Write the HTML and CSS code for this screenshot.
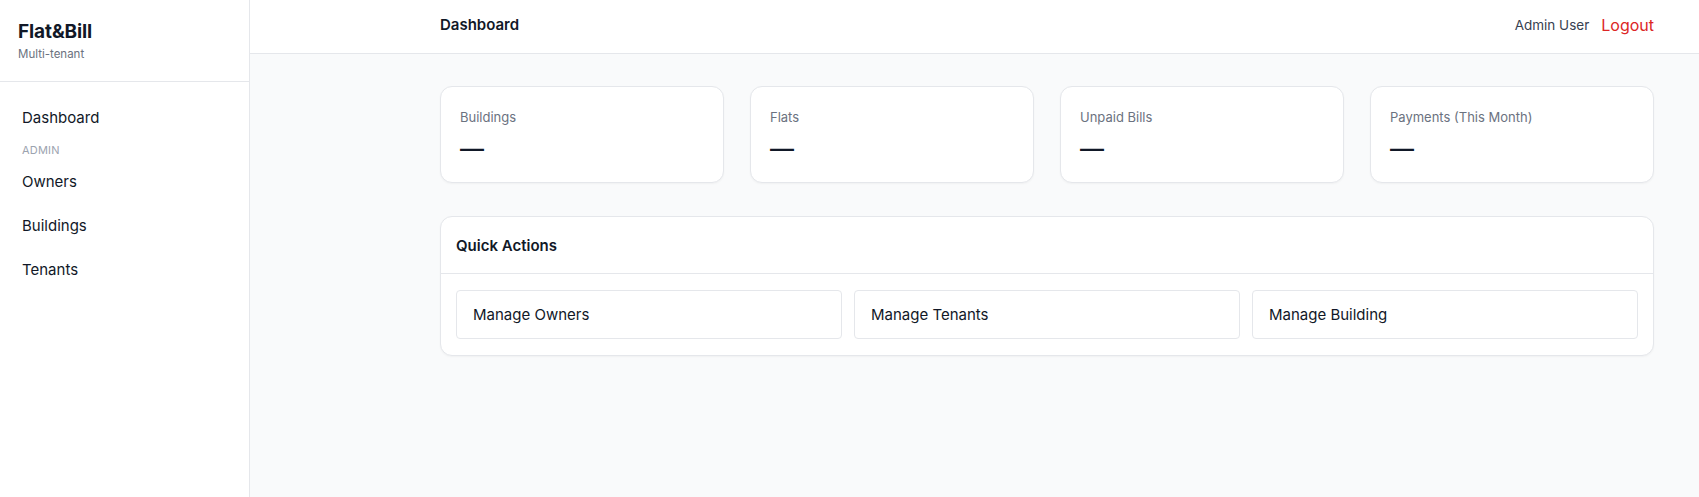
FILE: index.html
```html
<!DOCTYPE html>
<html lang="en">
<head>
<meta charset="utf-8">
<title>Flat&amp;Bill — Dashboard</title>
<link rel="stylesheet" href="styles.css">
</head>
<body>
<div class="app">
  <aside class="sidebar">
    <div class="brand">
      <div class="brand-name">Flat&amp;Bill</div>
      <div class="brand-sub">Multi-tenant</div>
    </div>
    <nav class="nav">
      <a class="nav-item" href="#">Dashboard</a>
      <div class="nav-section">ADMIN</div>
      <a class="nav-item" href="#">Owners</a>
      <a class="nav-item" href="#">Buildings</a>
      <a class="nav-item" href="#">Tenants</a>
    </nav>
  </aside>
  <div class="main">
    <header class="topbar">
      <div class="container topbar-inner">
        <h1 class="page-title">Dashboard</h1>
        <div class="user">
          <span class="user-name">Admin User</span>
          <a class="logout" href="#">Logout</a>
        </div>
      </div>
    </header>
    <main class="content">
      <div class="container">
        <div class="stats">
          <div class="card stat">
            <div class="stat-label">Buildings</div>
            <div class="stat-value">—</div>
          </div>
          <div class="card stat">
            <div class="stat-label">Flats</div>
            <div class="stat-value">—</div>
          </div>
          <div class="card stat">
            <div class="stat-label">Unpaid Bills</div>
            <div class="stat-value">—</div>
          </div>
          <div class="card stat">
            <div class="stat-label">Payments (This Month)</div>
            <div class="stat-value">—</div>
          </div>
        </div>
        <section class="card actions">
          <div class="actions-head">Quick Actions</div>
          <div class="actions-body">
            <a class="action" href="#">Manage Owners</a>
            <a class="action" href="#">Manage Tenants</a>
            <a class="action" href="#">Manage Building</a>
          </div>
        </section>
      </div>
    </main>
  </div>
</div>
</body>
</html>
```

FILE: styles.css
```css
* { box-sizing: border-box; }
html, body { margin: 0; height: 100%; }
body {
  font-family: "Inter", "Lato", sans-serif;
  color: #111827;
  background: #f9fafb;
}
a { text-decoration: none; color: inherit; }

.app { display: flex; min-height: 100vh; }

.sidebar {
  width: 250px;
  flex: none;
  background: #fff;
  border-right: 1px solid #e5e7eb;
}
.brand {
  padding: 20px 18px 0;
  height: 82px;
  border-bottom: 1px solid #e5e7eb;
}
.brand-name {
  font-size: 19px;
  font-weight: 700;
  line-height: 24px;
  letter-spacing: -0.1px;
}
.brand-sub {
  margin-top: 3px;
  font-size: 11.5px;
  line-height: 14px;
  color: #6b7280;
}
.nav {
  display: flex;
  flex-direction: column;
  padding: 14px 8px;
}
.nav-item {
  display: block;
  padding: 10px 14px;
  line-height: 24px;
  font-size: 15px;
  color: #111827;
}
.nav-section {
  padding: 0 14px;
  font-size: 11px;
  line-height: 20px;
  color: #9ca3af;
  letter-spacing: 0.2px;
}

.main { flex: 1; display: flex; flex-direction: column; }
.container { width: 1214px; margin-left: 190px; }

.topbar {
  height: 54px;
  padding-bottom: 3px;
  background: #fff;
  border-bottom: 1px solid #e5e7eb;
}
.topbar-inner {
  height: 100%;
  display: flex;
  align-items: center;
  justify-content: space-between;
}
.page-title {
  margin: 0;
  font-size: 15px;
  font-weight: 600;
  line-height: 20px;
}
.user { display: flex; align-items: center; gap: 12px; }
.user-name { font-size: 13.5px; color: #374151; }
.logout { font-size: 16px; color: #dc2626; }

.content { padding: 32px 0; }

.card {
  background: #fff;
  border: 1px solid #e5e7eb;
  border-radius: 12px;
  box-shadow: 0 1px 2px rgba(0,0,0,0.04);
}
.stats {
  display: grid;
  grid-template-columns: repeat(4, 1fr);
  gap: 26px;
}
.stat { height: 97px; padding: 20px 19px; }
.stat-label { font-size: 13px; line-height: 20px; color: #6b7280; }
.stat-value {
  margin-top: 6px;
  font-size: 24px;
  line-height: 32px;
  font-weight: 500;
  color: #111827;
}

.actions { margin-top: 33px; }
.actions-head {
  height: 57px;
  display: flex;
  align-items: center;
  padding: 0 15px;
  font-size: 15px;
  font-weight: 600;
  border-bottom: 1px solid #e5e7eb;
}
.actions-body {
  display: grid;
  grid-template-columns: repeat(3, 1fr);
  gap: 12px;
  padding: 16px 15px;
}
.action {
  height: 49px;
  display: flex;
  align-items: center;
  padding: 0 16px;
  border: 1px solid #e5e7eb;
  border-radius: 4px;
  font-size: 15px;
  color: #111827;
}
```
